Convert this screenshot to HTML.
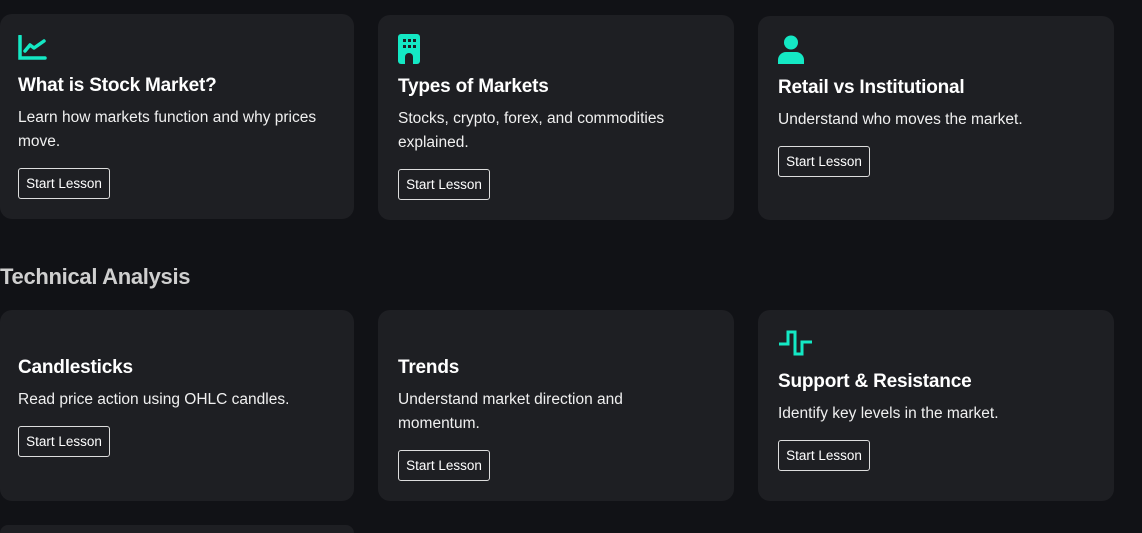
<!DOCTYPE html>
<html style="width:1142px;height:533px;overflow:hidden"><head><style>
*{margin:0;padding:0;box-sizing:border-box}
body{width:1142px;height:533px;background:#111216;overflow:hidden;position:relative;font-family:"Liberation Sans",sans-serif;color:#fff}
.c{position:absolute;background:#1e1f23;border-radius:12px}
.a{position:absolute}
.t{position:absolute;font-size:19px;font-weight:bold;white-space:nowrap;letter-spacing:-0.2px}
.d{position:absolute;font-size:15.5px;line-height:24px;color:#f0f0f0;width:305px}
.b{position:absolute;border:1px solid #ddd;border-radius:3px;font-size:13.5px;color:#fff;width:92px;height:31px;line-height:29px;text-align:center}
h2{position:absolute;left:0;top:264px;font-size:22px;color:#cfcfcf;font-weight:bold;letter-spacing:-0.3px}
</style></head><body>
<div class="c" style="left:0;top:14px;width:354px;height:205px"></div>
<div class="c" style="left:378px;top:15px;width:356px;height:205px"></div>
<div class="c" style="left:758px;top:16px;width:356px;height:204px"></div>
<div class="c" style="left:0;top:310px;width:354px;height:191px"></div>
<div class="c" style="left:378px;top:310px;width:356px;height:191px"></div>
<div class="c" style="left:758px;top:310px;width:356px;height:191px"></div>
<div class="c" style="left:0;top:525px;width:354px;height:8px;border-radius:12px 12px 0 0"></div>

<svg class="a" style="left:18px;top:35px" width="29" height="25" viewBox="0 0 29 25"><path d="M2 1V23H27" stroke="#14e8c4" stroke-width="3.5" fill="none" stroke-linecap="round"/><path d="M7 16L12 10L16 13L26 6" stroke="#14e8c4" stroke-width="3.5" fill="none" stroke-linecap="round" stroke-linejoin="round"/></svg>
<div class="t" style="left:18px;top:75px">What is Stock Market?</div>
<div class="d" style="left:18px;top:106px">Learn how markets function and why prices move.</div>
<div class="b" style="left:18px;top:168px">Start Lesson</div>

<svg class="a" style="left:398px;top:34px" width="22" height="30" viewBox="0 0 22 30"><rect x="0" y="0" width="22" height="30" rx="3" fill="#14e8c4"/><g fill="#1e1f23"><rect x="5" y="5" width="3" height="3"/><rect x="10" y="5" width="3" height="3"/><rect x="15" y="5" width="3" height="3"/><rect x="5" y="11" width="3" height="3"/><rect x="10" y="11" width="3" height="3"/><rect x="15" y="11" width="3" height="3"/><path d="M7 30V23a4 4 0 0 1 8 0V30z"/></g></svg>
<div class="t" style="left:398px;top:76px">Types of Markets</div>
<div class="d" style="left:398px;top:107px">Stocks, crypto, forex, and commodities explained.</div>
<div class="b" style="left:398px;top:169px">Start Lesson</div>

<svg class="a" style="left:778px;top:35px" width="26" height="29" viewBox="0 0 26 29"><circle cx="13" cy="7.5" r="7" fill="#14e8c4"/><path d="M0 29V25a8 8 0 0 1 8-8h10a8 8 0 0 1 8 8V29z" fill="#14e8c4"/></svg>
<div class="t" style="left:778px;top:77px">Retail vs Institutional</div>
<div class="d" style="left:778px;top:108px">Understand who moves the market.</div>
<div class="b" style="left:778px;top:146px">Start Lesson</div>

<h2>Technical Analysis</h2>

<div class="t" style="left:18px;top:357px">Candlesticks</div>
<div class="d" style="left:18px;top:388px">Read price action using OHLC candles.</div>
<div class="b" style="left:18px;top:426px">Start Lesson</div>

<div class="t" style="left:398px;top:357px">Trends</div>
<div class="d" style="left:398px;top:388px;width:260px">Understand market direction and momentum.</div>
<div class="b" style="left:398px;top:450px">Start Lesson</div>

<svg class="a" style="left:778px;top:330px" width="36" height="26" viewBox="0 0 36 26"><path d="M1 14H10V2H17V24H24V12H34" stroke="#14e8c4" stroke-width="3" fill="none"/></svg>
<div class="t" style="left:778px;top:371px">Support &amp; Resistance</div>
<div class="d" style="left:778px;top:402px">Identify key levels in the market.</div>
<div class="b" style="left:778px;top:440px">Start Lesson</div>
</body></html>
